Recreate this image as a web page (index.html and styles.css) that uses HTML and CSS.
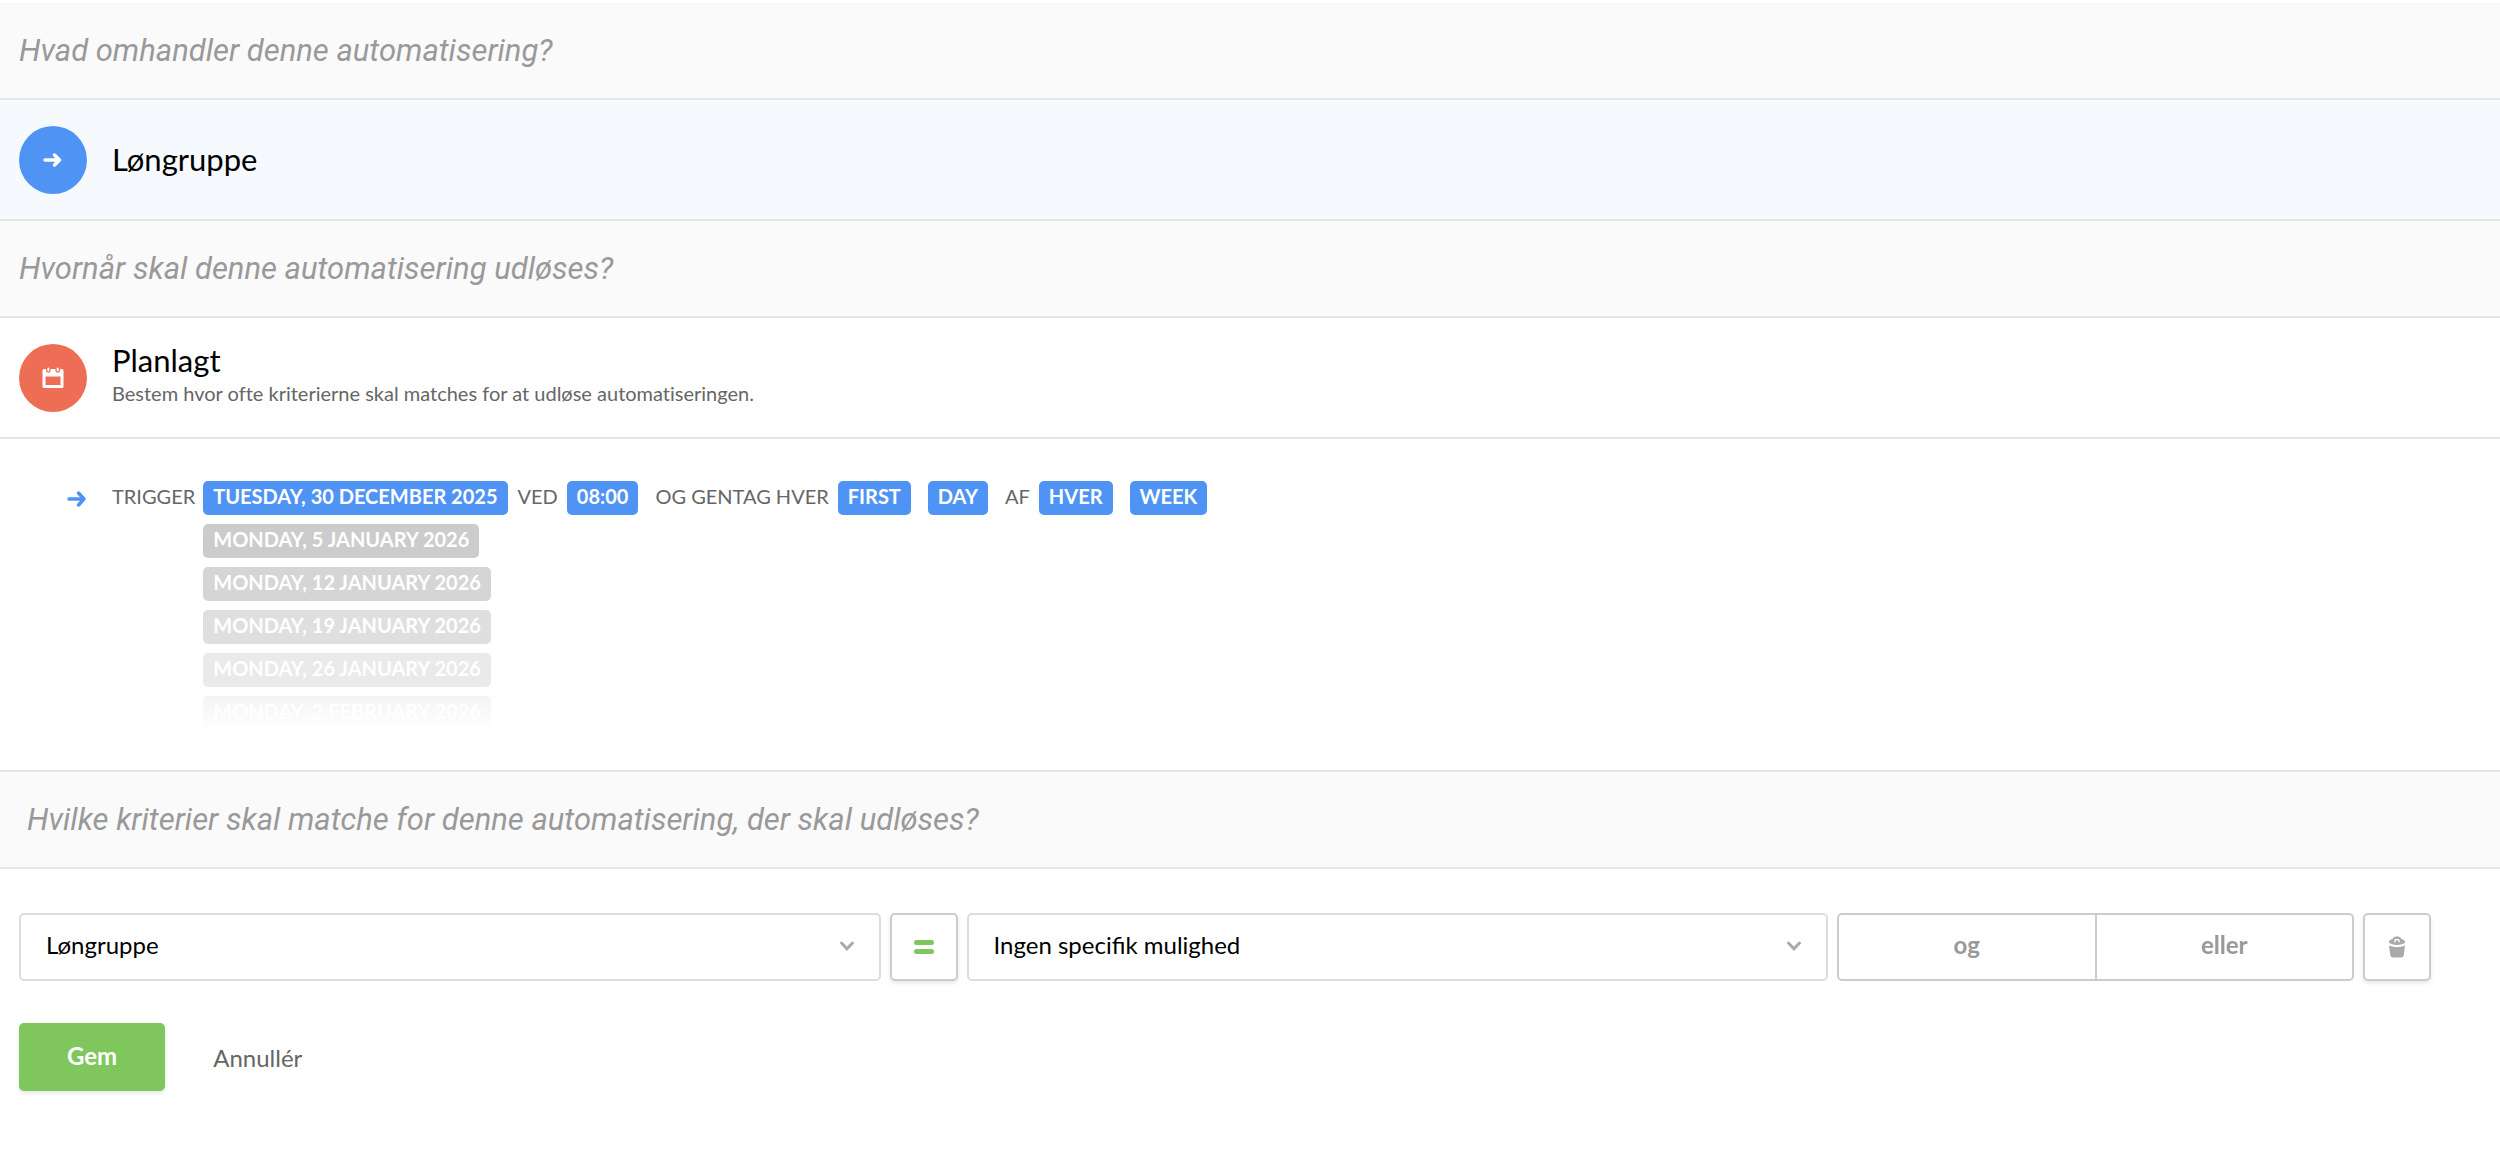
FILE: index.html
```html
<!DOCTYPE html>
<html lang="da">
<head>
    <meta charset="utf-8">
    <meta name="viewport" content="width=device-width, initial-scale=1">
    <title>Automatisering</title>
    <link rel="stylesheet" href="styles.css">
</head>
<body>
    <h2 class="question">Hvad omhandler denne automatisering?</h2>

    <div class="choice choice-selected">
        <span class="circle circle-blue">
            <svg width="20" height="18" viewBox="0 0 20 18"><path d="M2 9h14M11.500 4l5 5-5 5" fill="none" stroke="#fff" stroke-width="3.500" stroke-linecap="round" stroke-linejoin="round"/></svg>
        </span>
        <p class="choice-title">Løngruppe</p>
    </div>

    <h2 class="question">Hvornår skal denne automatisering udløses?</h2>

    <div class="choice">
        <span class="circle circle-red">
            <svg width="22" height="22" viewBox="0 0 22 22"><path fill="#fff" fill-rule="evenodd" d="M2 2h2v1.500a2.300 2.300 0 0 0 4.600 0V2h4.800v1.500a2.300 2.300 0 0 0 4.600 0V2h2q1.500 0 1.500 1.500v16q0 1.500-1.500 1.500H2Q.5 21 .5 19.500v-16Q.5 2 2 2zM3.500 9.500V18h15V9.500z"/><path d="M6.300 1.500v2M15.700 1.500v2" stroke="#fff" stroke-width="2" stroke-linecap="round"/></svg>
        </span>
        <div class="choice-info">
            <p class="choice-title">Planlagt</p>
            <p class="choice-text">Bestem hvor ofte kriterierne skal matches for at udløse automatiseringen.</p>
        </div>
    </div>

    <div class="trigger">
        <svg class="trigger-arrow" width="20" height="18" viewBox="0 0 20 18"><path d="M2 9h14M11.500 3l5.500 6-5.500 6" fill="none" stroke="#4f94f4" stroke-width="3.500" stroke-linecap="round" stroke-linejoin="round"/></svg>
        <span class="trigger-label">Trigger</span>
        <div class="dates">
            <button class="tag">Tuesday, 30 December 2025</button>
            <span class="tag next-1">Monday, 5 January 2026</span>
            <span class="tag next-2">Monday, 12 January 2026</span>
            <span class="tag next-3">Monday, 19 January 2026</span>
            <span class="tag next-4">Monday, 26 January 2026</span>
            <span class="tag next-5">Monday, 2 February 2026</span>
        </div>
        <div class="part">
            <span>Ved</span>
            <button class="tag">08:00</button>
        </div>
        <div class="part">
            <span>og gentag hver</span>
            <button class="tag">First</button>
        </div>
        <button class="tag">Day</button>
        <div class="part">
            <span>af</span>
            <button class="tag">hver</button>
        </div>
        <button class="tag">Week</button>
    </div>

    <h2 class="question question-criteria">Hvilke kriterier skal matche for denne automatisering, der skal udløses?</h2>

    <form class="criteria">
        <div class="criteria-row">
            <div class="select-box">
                <select class="select" aria-label="Kriterie">
                    <option>Løngruppe</option>
                </select>
                <svg class="chevron" width="16" height="12" viewBox="0 0 16 12"><path d="M2.500 3L8 8.800 13.500 3" fill="none" stroke="#aaa" stroke-width="3" stroke-linecap="round"/></svg>
            </div>
            <button type="button" class="square-button" aria-label="Er lig med">
                <svg width="20" height="14" viewBox="0 0 20 14"><path d="M2.500 2.500h15M2.500 11.500h15" stroke="#7fc65d" stroke-width="5" stroke-linecap="round"/></svg>
            </button>
            <div class="select-box">
                <select class="select" aria-label="Værdi">
                    <option>Ingen specifik mulighed</option>
                </select>
                <svg class="chevron" width="16" height="12" viewBox="0 0 16 12"><path d="M2.500 3L8 8.800 13.500 3" fill="none" stroke="#aaa" stroke-width="3" stroke-linecap="round"/></svg>
            </div>
            <div class="and-or">
                <button type="button" class="and-or-button">og</button>
                <button type="button" class="and-or-button">eller</button>
            </div>
            <button type="button" class="square-button" aria-label="Slet">
                <svg width="18" height="22" viewBox="0 0 18 22"><path fill="#aaa" fill-rule="evenodd" d="M1 7C.5 5 2 3.500 4.500 3 5.500 1 7 .5 9 .5s3.500.5 4.500 2.500C16 3.500 17.500 5 17 7Q9 11 1 7zM6 6l1.300.3L8.300 4h1.400l1 2.300L12 6l-1-3H7z"/><path fill="#aaa" d="M1 9.500q8 3.500 16 0l-1.200 9.500q-.3 2.500-3.300 2.500h-7q-3 0-3.300-2.500z"/></svg>
            </button>
        </div>

        <div class="actions">
            <button type="submit" class="save-button">Gem</button>
            <a href="#" class="cancel-link">Annullér</a>
        </div>
    </form>
</body>
</html>
```
FILE: styles.css
```css
body {
    margin: 0;
    padding-top: 3px;
    background-color: white;
    color: #666;
    font-family: "Lato", "Liberation Sans", sans-serif;
    font-size: 20px;
    font-variant-ligatures: none;
}

p {
    margin: 0;
}

svg {
    display: block;
}

button {
    font-family: inherit;
    cursor: pointer;
}

.question {
    margin: 0;
    padding: 30px 19px 29px;
    background-color: #fafafa;
    border-bottom: 2px solid #e4e5e6;
    color: #999;
    font-family: "Roboto", "Liberation Sans", sans-serif;
    font-size: 31px;
    font-style: italic;
    font-weight: normal;
    line-height: 36px;
}

.choice {
    display: flex;
    align-items: center;
    gap: 25px;
    min-height: 119px;
    padding: 0 19px;
    border-bottom: 2px solid #e4e5e6;
}

.choice-selected {
    background-color: #f6f9fe;
}

.choice-info {
    padding-bottom: 6px;
}

.circle {
    display: flex;
    align-items: center;
    justify-content: center;
    width: 68px;
    height: 68px;
    border-radius: 50%;
}

.circle-blue {
    background-color: #4f94f4;
}

.circle-red {
    background-color: #ee6e55;
}

.choice-title {
    padding-bottom: 2px;
    color: black;
    font-size: 31px;
    line-height: 34px;
}

.choice-text {
    line-height: 28px;
}

.trigger {
    display: flex;
    align-items: flex-start;
    padding: 42px 67px 40px;
    line-height: 30px;
    text-transform: uppercase;
}

.trigger-arrow {
    margin: 9px 25px 0 0;
}

.trigger-label {
    margin-right: 8px;
}

.dates {
    display: flex;
    flex-direction: column;
    align-items: flex-start;
    gap: 9px;
    margin-right: 10px;
}

.part {
    display: flex;
    gap: 9px;
}

.part + .part,
.part + .tag,
.tag + .part {
    margin-left: 17px;
}

.tag {
    padding: 0 10px 4px;
    background-color: #4f94f4;
    border: none;
    border-radius: 5px;
    color: white;
    font-size: 20px;
    font-weight: bold;
    line-height: 30px;
    text-transform: uppercase;
}

.next-1 {
    background-color: #ccc;
}

.next-2 {
    background-color: #d5d5d5;
}

.next-3 {
    background-color: #dfdfdf;
}

.next-4 {
    background-color: #eaeaea;
}

.next-5 {
    background: linear-gradient(#f4f4f4, white);
}

.question-criteria {
    padding-left: 27px;
    border-top: 2px solid #e4e5e6;
}

.criteria {
    padding: 44px 69px 44px 19px;
}

.criteria-row {
    display: flex;
    gap: 9px;
}

.select-box {
    position: relative;
    flex: 5;
}

.select {
    width: 100%;
    height: 68px;
    padding: 0 50px 6px 25px;
    appearance: none;
    background-color: white;
    border: 2px solid #ddd;
    border-radius: 5px;
    color: black;
    font-family: inherit;
    font-size: 24px;
}

.chevron {
    position: absolute;
    top: 27px;
    right: 26px;
    pointer-events: none;
}

.square-button {
    display: flex;
    align-items: center;
    justify-content: center;
    width: 68px;
    height: 68px;
    padding: 0;
    background-color: white;
    border: 2px solid #ccc;
    border-radius: 5px;
    box-shadow: 0 2px 4px rgba(0, 0, 0, 0.1);
}

.and-or {
    display: flex;
    flex: 3;
}

.and-or-button {
    flex: 1;
    padding: 0 0 6px;
    background-color: white;
    border: 2px solid #ccc;
    border-radius: 5px 0 0 5px;
    color: #999;
    font-size: 24px;
    font-weight: bold;
}

.and-or-button + .and-or-button {
    border-left: none;
    border-radius: 0 5px 5px 0;
}

.actions {
    display: flex;
    align-items: center;
    gap: 48px;
    margin-top: 42px;
}

.save-button {
    height: 68px;
    padding: 0 48px 4px;
    background-color: #7fc65d;
    border: none;
    border-radius: 5px;
    box-shadow: 0 2px 4px rgba(0, 0, 0, 0.1);
    color: white;
    font-size: 24px;
    font-weight: bold;
}

.cancel-link {
    color: #666;
    font-size: 24px;
    text-decoration: none;
}
```
